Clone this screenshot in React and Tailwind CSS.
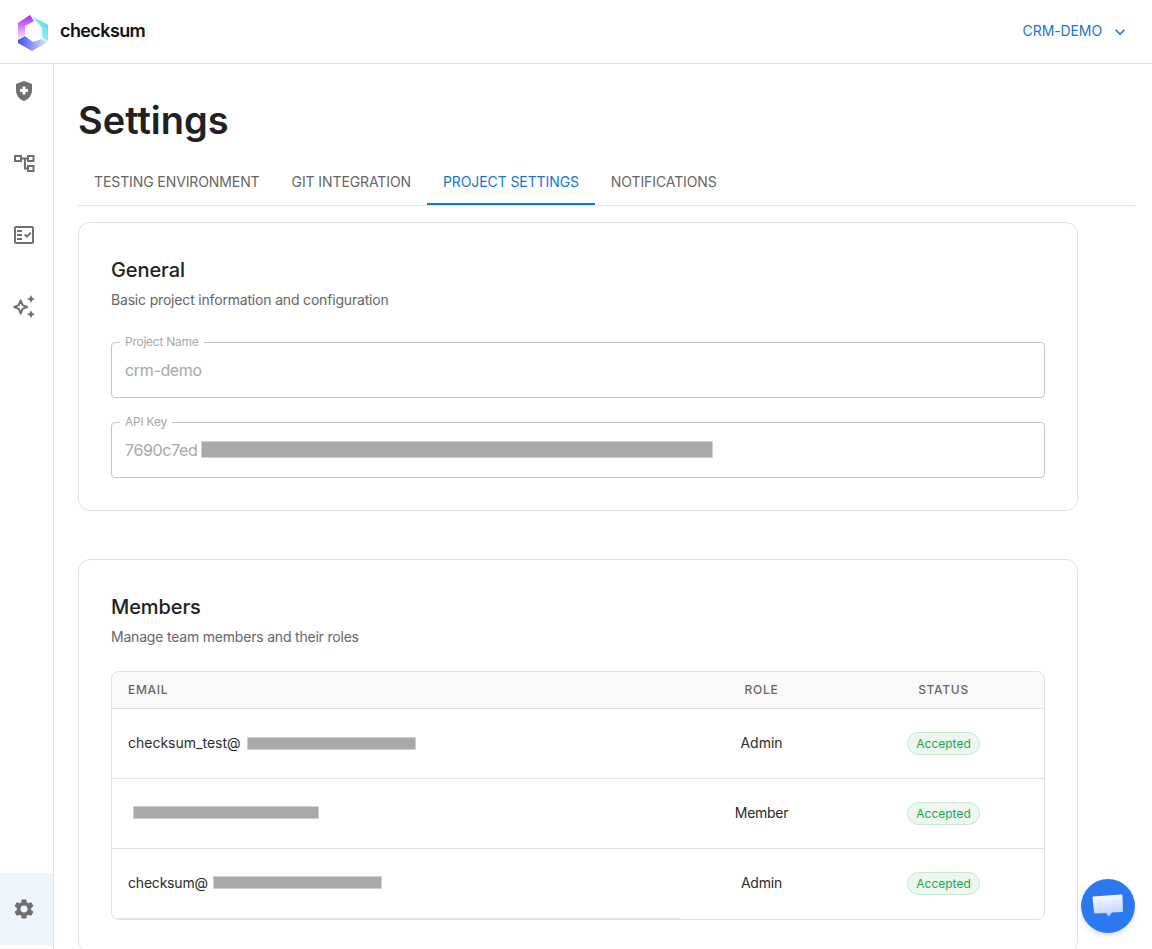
import { MdHealthAndSafety, MdOutlineFactCheck, MdSettings, MdKeyboardArrowDown } from "react-icons/md"

const Logo = () => (
  <svg width="34" height="38" viewBox="0 0 34 38">
    <defs>
      <linearGradient id="lg1" x1="0" y1="0" x2="0" y2="1">
        <stop offset="0" stopColor="#b01ff5" />
        <stop offset="1" stopColor="#f8e4fc" />
      </linearGradient>
      <linearGradient id="lg2" x1="1" y1="0" x2="0" y2="1">
        <stop offset="0" stopColor="#2fd6e6" />
        <stop offset="1" stopColor="#e4fbfb" />
      </linearGradient>
      <linearGradient id="lg3" x1="0" y1="0" x2="1" y2="0">
        <stop offset="0" stopColor="#3a50f0" />
        <stop offset="1" stopColor="#e4eafd" />
      </linearGradient>
    </defs>
    <polygon points="14,2 2,10 2,26 9,22 9,13 18,8" fill="url(#lg1)" />
    <polygon points="16,3 32,12 32,28 26,25 26,15 20,8" fill="url(#lg2)" />
    <polygon points="2,27 9,23 17,29 26,26 32,29 16,38 2,30" fill="url(#lg3)" />
  </svg>
)

const TreeIcon = () => (
  <svg width="22" height="22" viewBox="0 0 22 22" fill="none" stroke="#707070" strokeWidth="2">
    <rect x="2" y="4" width="6" height="5" />
    <rect x="15" y="4" width="5.500" height="5" />
    <rect x="15" y="14" width="5.500" height="5" />
    <path d="M8 6.500h7M12 6.500v10h3" />
  </svg>
)

const SparkIcon = () => (
  <svg width="24" height="24" viewBox="0 0 24 24" fill="#707070">
    <path d="M8.700 5.500L10.600 10.100L15.200 12L10.600 13.900L8.700 18.500L6.800 13.900L2.200 12L6.800 10.100Z" fill="none" stroke="#707070" strokeWidth="2" strokeLinejoin="round" />
    <path d="M19 0l1.300 2.700L23 4l-2.700 1.300L19 8l-1.300-2.700L15 4l2.700-1.300L19 0z" />
    <path d="M19 15.300l1.300 2.700 2.700 1.300-2.700 1.300-1.300 2.700-1.300-2.700-2.700-1.300 2.700-1.300 1.300-2.700z" />
  </svg>
)

const ChatIcon = () => (
  <svg width="32" height="28" viewBox="0 0 32 28">
    <defs>
      <linearGradient id="chat" x1="0" y1="0" x2="0.2" y2="1">
        <stop offset="0" stopColor="#ffffff" />
        <stop offset="1" stopColor="#bdd3fa" />
      </linearGradient>
    </defs>
    <path d="M1 4.500L29.500 2.500C30 2.500 30.500 3 30.500 3.500L31 19C31 19.500 30.500 20 30 20L20 20.500L17 24.500L14 21L3 21.500C2.500 21.500 2 21 2 20.500L0.500 5C0.500 4.800 0.800 4.500 1 4.500Z" fill="url(#chat)" />
  </svg>
)

const Redacted = ({ className }) => (
  <span className={"inline-block bg-[#a9a9a9] border border-[#d0d0d0] " + className} />
)

const Field = ({ label, children }) => (
  <div className="relative h-14 border border-[#c4c4c4] rounded flex items-center px-[13px] text-base tracking-[-0.35px] text-[#a8a8a8]">
    <span className="absolute left-2 -top-[9px] bg-white px-[5px] text-xs leading-4 tracking-[-0.25px] text-[#a8a8a8]">{label}</span>
    {children}
  </div>
)

const Badge = () => (
  <span className="inline-block rounded-full bg-[#edf7f0] border border-[#c5e8d1] px-2 text-xs leading-[21px] text-[#1ea64c]">
    Accepted
  </span>
)

const rows = [
  { label: "checksum_test@", bar: "w-[169px] h-[13px] ml-[6px]", role: "Admin", track: "" },
  { label: "", bar: "w-[186px] h-[13px] ml-[5px] -translate-y-[1px]", role: "Member", track: "tracking-[-0.3px]" },
  { label: "checksum@", bar: "w-[169px] h-[13px] ml-[5px] -translate-y-[1px]", role: "Admin", track: "tracking-[-0.2px]" },
]

const Tab = ({ active, children }) => (
  <div className={"relative px-4 flex items-center " + (active ? "text-[#1976d2]" : "")}>
    {children}
    {active && <span className="absolute left-0 right-0 bottom-0 h-[2px] bg-[#1976d2]" />}
  </div>
)

export default function App() {
  return (
    <div className="h-[949px] overflow-hidden bg-white text-[#212121] font-['Inter',sans-serif] relative">
      <header className="h-16 border-b border-[#e0e0e0] flex items-center justify-between pl-4 pr-[22px]">
        <div className="flex items-center gap-[10px]">
          <Logo />
          <span className="text-[18px] font-semibold tracking-[-0.6px] text-[#111] -mt-[2px]">checksum</span>
        </div>
        <div className="flex items-center gap-[8px] text-sm tracking-[-0.1px] text-[#1976d2]">
          <span className="-translate-y-[1px]">CRM-DEMO</span>
          <MdKeyboardArrowDown size={20} />
        </div>
      </header>

      <div className="flex h-[885px]">
        <aside className="w-[54px] shrink-0 border-r border-[#e0e0e0] flex flex-col pt-[15px]">
          <div className="flex flex-col items-center w-12">
            <div className="h-6 flex items-center"><MdHealthAndSafety size={24} color="#707070" /></div>
            <div className="h-6 mt-12 flex items-center"><TreeIcon /></div>
            <div className="h-6 mt-12 flex items-center"><MdOutlineFactCheck size={24} color="#707070" /></div>
            <div className="h-6 mt-12 flex items-center"><SparkIcon /></div>
          </div>
          <div className="mt-auto mb-1 w-full h-[72px] bg-[#eff5fc] flex items-center pl-3">
            <MdSettings size={24} color="#707070" />
          </div>
        </aside>

        <main className="flex-1 pl-6 pr-[17px]">
          <h1 className="text-[38px] leading-[46px] font-semibold mt-[33px]">Settings</h1>
          <nav className="flex mt-[15px] h-[48px] border-b border-[#e0e0e0] text-sm tracking-[-0.1px] text-[#666]">
            <Tab>TESTING ENVIRONMENT</Tab>
            <Tab>GIT INTEGRATION</Tab>
            <Tab active>PROJECT SETTINGS</Tab>
            <Tab>NOTIFICATIONS</Tab>
          </nav>

          <section className="w-[1000px] mt-4 border border-[#e0e0e0] rounded-xl p-8">
            <h2 className="text-xl leading-[30px] font-medium tracking-[-0.1px]">General</h2>
            <p className="text-sm leading-5 mt-[5px] tracking-[-0.18px] text-[#666]">Basic project information and configuration</p>
            <div className="mt-[32px] flex flex-col gap-6">
              <Field label="Project Name">crm-demo</Field>
              <Field label="API Key">
                <span>7690c7ed</span>
                <Redacted className="w-[512px] h-[17px] ml-[4px] -translate-y-[1px]" />
              </Field>
            </div>
          </section>

          <section className="w-[1000px] mt-12 border border-[#e0e0e0] rounded-xl p-8">
            <h2 className="text-xl leading-[30px] font-medium tracking-[-0.1px]">Members</h2>
            <p className="text-sm leading-5 mt-[5px] tracking-[-0.2px] text-[#666]">Manage team members and their roles</p>
            <div className="mt-6 border border-[#e0e0e0] rounded-lg overflow-hidden">
              <div className="grid grid-cols-[568px_163px_1fr] h-[37px] items-center bg-[#fafafa] border-b border-[#e0e0e0] text-xs font-medium tracking-[0.7px] text-[#666]">
                <div className="pl-4">EMAIL</div>
                <div className="text-center">ROLE</div>
                <div className="text-center">STATUS</div>
              </div>
              {rows.map((row, i) => (
                <div key={i} className={"grid grid-cols-[568px_163px_1fr] h-[70px] text-sm text-[#2b2b2b] " + (i < 2 ? "border-b border-[#e0e0e0]" : "")}>
                  <div className={"flex items-center pl-4 " + row.track + (i === 2 ? " border-b border-[#e0e0e0] pb-px" : " pb-px")}>
                    {row.label}
                    <Redacted className={row.bar} />
                  </div>
                  <div className={"flex items-center justify-center " + row.track + (i === 2 ? " pb-[2px]" : " pb-px")}>{row.role}</div>
                  <div className={"flex items-center justify-center " + (i === 2 ? "pb-px" : "")}><Badge /></div>
                </div>
              ))}
            </div>
          </section>
        </main>
      </div>

      <button className="absolute left-[1081px] top-[879px] w-[54px] h-[54px] rounded-full bg-[#2b78f0] flex items-center justify-center shadow-md">
        <ChatIcon />
      </button>
    </div>
  )
}
